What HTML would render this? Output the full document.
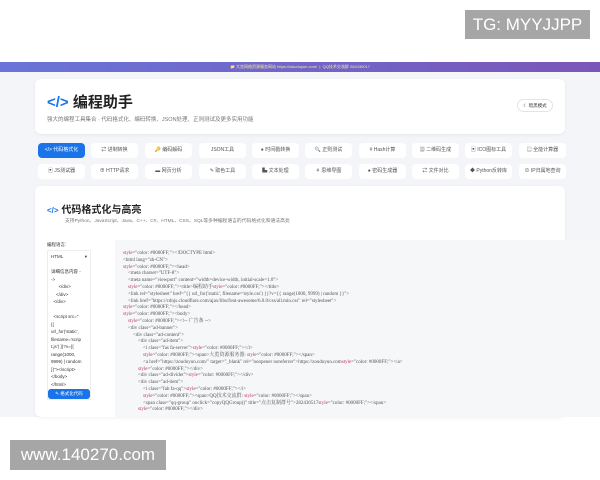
<!DOCTYPE html>
<html><head><meta charset="utf-8"><style>
*{margin:0;padding:0;box-sizing:border-box}
body{width:600px;height:480px;background:#fff;font-family:"Liberation Sans","Noto Sans CJK SC",sans-serif;position:relative;overflow:hidden}
.bg{position:absolute;left:0;top:72px;width:600px;height:345px;background:#f3f5f8}
.bar{position:absolute;left:0;top:62px;width:600px;height:10px;background:linear-gradient(90deg,#6a74d8,#7a56b8);color:#f6e9a0;font-size:4px;text-align:center;line-height:10px}
.wm{position:absolute;background:#a6a6a6;color:#fff;font-size:17px;line-height:30px;text-align:center}
.card{position:absolute;background:#fff;border-radius:6px;box-shadow:0 1px 3px rgba(0,0,0,.06)}
.h1{position:absolute;left:12px;top:12px;font-size:15px;font-weight:bold;color:#222}
.h1 b{color:#1a73e8}
.sub{position:absolute;font-size:5.5px;color:#777}
.btn{position:absolute;height:15px;width:47px;background:#fff;border-radius:4px;font-size:5px;color:#555;text-align:center;line-height:15px}
.btn.a{background:#1a73e8;color:#fff}
.code{position:absolute;left:115px;top:240px;width:485px;height:177px;background:#f5f7f9;font-family:"Liberation Serif","Noto Serif CJK SC",serif;font-size:5px;line-height:6.8px;color:#555;padding:11px 0 0 8px;white-space:pre;overflow:hidden}
.code i{color:#c0395a;font-style:normal}.code u{color:#3a8a3a;text-decoration:none}
</style></head><body>
<div class="bg"></div>
<div class="bar">📁 大览网络资源服务网站 https://xiaoduyun.com/ &nbsp;|&nbsp; QQ技术交流群 282430017</div>
<div class="wm" style="left:465px;top:10px;width:125px;height:29px">TG: MYYJJPP</div>
<div class="wm" style="left:10px;top:440px;width:156px;height:30px">www.140270.com</div>

<div class="card" style="left:35px;top:79px;width:530px;height:55px">
<div class="h1"><b>&lt;/&gt;</b> 编程助手</div>
<div class="sub" style="left:12px;top:36px">强大的编程工具集合 · 代码格式化、编码转换、JSON处理、正则测试及更多实用功能</div>
<div style="position:absolute;right:12px;top:20px;width:36px;height:13px;border:1px solid #e4e4e4;border-radius:7px;font-size:4.5px;line-height:11px;text-align:center;color:#333">☾ 暗黑模式</div>
</div>

<div class="btn a" style="left:38px;top:143px">&lt;/&gt; 代码格式化</div>
<div class="btn" style="left:91px;top:143px">⇄ 进制转换</div>
<div class="btn" style="left:145px;top:143px">🔑 编码解码</div>
<div class="btn" style="left:199px;top:143px">JSON工具</div>
<div class="btn" style="left:252px;top:143px">● 时间戳转换</div>
<div class="btn" style="left:305px;top:143px">🔍 正则测试</div>
<div class="btn" style="left:359px;top:143px"># Hash计算</div>
<div class="btn" style="left:412px;top:143px">▦ 二维码生成</div>
<div class="btn" style="left:465px;top:143px">▣ ICO图标工具</div>
<div class="btn" style="left:519px;top:143px">▤ 全能计算器</div>
<div class="btn" style="left:38px;top:164px">▣ JS测试器</div>
<div class="btn" style="left:91px;top:164px">⊕ HTTP请求</div>
<div class="btn" style="left:145px;top:164px">▬ 网页分析</div>
<div class="btn" style="left:199px;top:164px">✎ 取色工具</div>
<div class="btn" style="left:252px;top:164px">▙ 文本处理</div>
<div class="btn" style="left:305px;top:164px">⚘ 思维导图</div>
<div class="btn" style="left:359px;top:164px">● 密码生成器</div>
<div class="btn" style="left:412px;top:164px">⇄ 文件对比</div>
<div class="btn" style="left:465px;top:164px">◆ Python反转库</div>
<div class="btn" style="left:519px;top:164px">⊘ IP归属地查询</div>

<div class="card" style="left:35px;top:186px;width:530px;height:231px">
<div style="position:absolute;left:12px;top:15px;font-size:10px;font-weight:bold;color:#222"><span style="color:#1a73e8;font-size:8px">&lt;/&gt;</span> 代码格式化与高亮</div>
<div class="sub" style="left:30px;top:31px;font-size:4.8px">支持Python、JavaScript、Java、C++、C#、HTML、CSS、SQL等多种编程语言的代码格式化和语法高亮</div>
<div style="position:absolute;left:12px;top:56px;font-size:4.5px;color:#333">编程语言:</div>
<div style="position:absolute;left:12px;top:64px;width:44px;height:150px;background:#fff;border:1px solid #eee;font-size:4.5px;line-height:7.5px;color:#333;padding:2px 3px">HTML<span style="float:right">▾</span><br><br>详细信息内容 -<br>-&gt;<br>&nbsp;&nbsp;&nbsp;&nbsp;&nbsp;&nbsp;&lt;/div&gt;<br>&nbsp;&nbsp;&nbsp;&nbsp;&lt;/div&gt;<br>&nbsp;&nbsp;&lt;/div&gt;<br><br>&nbsp;&nbsp;&lt;script src="<br>{{<br>url_for('static',<br>filename='scrip<br>t.js') }}?v={{<br>range(1000,<br>9999) | random<br>}}"&gt;&lt;/script&gt;<br>&lt;/body&gt;<br>&lt;/html&gt;</div>
<div style="position:absolute;left:13px;top:203px;width:42px;height:10px;background:#1a73e8;border-radius:3px;color:#fff;font-size:4.5px;line-height:10px;text-align:center">✎ 格式化代码</div>
</div>
<div class="code"><i>style</i>="color: #0000FF;"&gt;&lt;!DOCTYPE html&gt;
&lt;html lang="zh-CN"&gt;
<i>style</i>="color: #0000FF;"&gt;&lt;head&gt;
    &lt;meta charset="UTF-8"&gt;
    &lt;meta name="viewport" content="width=device-width, initial-scale=1.0"&gt;
    <i>style</i>="color: #0000FF;"&gt;&lt;title&gt;编程助手<i>style</i>="color: #0000FF;"&gt;&lt;/title&gt;
    &lt;link rel="stylesheet" href="{{ url_for('static', filename='style.css') }}?v={{ range(1000, 9999) | random }}"&gt;
    &lt;link href="https://cdnjs.cloudflare.com/ajax/libs/font-awesome/6.0.0/css/all.min.css" rel="stylesheet"&gt;
<i>style</i>="color: #0000FF;"&gt;&lt;/head&gt;
<i>style</i>="color: #0000FF;"&gt;&lt;body&gt;
    <i>style</i>="color: #0000FF;"&gt;&lt;!-- 广告条 --&gt;
    &lt;div class="ad-banner"&gt;
        &lt;div class="ad-content"&gt;
            &lt;div class="ad-item"&gt;
                &lt;i class="fas fa-server"&gt;<i>style</i>="color: #0000FF;"&gt;&lt;/i&gt;
                <i>style</i>="color: #0000FF;"&gt;&lt;span&gt;大览资源服务器: <i>style</i>="color: #0000FF;"&gt;&lt;/span&gt;
                &lt;a href="https://zoudoyun.com/" target="_blank" rel="noopener noreferrer"&gt;https://zoudoyun.com<i>style</i>="color: #0000FF;"&gt;&lt;/a&gt;
            <i>style</i>="color: #0000FF;"&gt;&lt;/div&gt;
            &lt;div class="ad-divider"&gt;<i>style</i>="color: #0000FF;"&gt;&lt;/div&gt;
            &lt;div class="ad-item"&gt;
                &lt;i class="fab fa-qq"&gt;<i>style</i>="color: #0000FF;"&gt;&lt;/i&gt;
                <i>style</i>="color: #0000FF;"&gt;&lt;span&gt;QQ技术交流群: <i>style</i>="color: #0000FF;"&gt;&lt;/span&gt;
                &lt;span class="qq-group" onclick="copyQQGroup()" title="点击复制群号"&gt;282430517<i>style</i>="color: #0000FF;"&gt;&lt;/span&gt;
            <i>style</i>="color: #0000FF;"&gt;&lt;/div&gt;
</div>
</body></html>
